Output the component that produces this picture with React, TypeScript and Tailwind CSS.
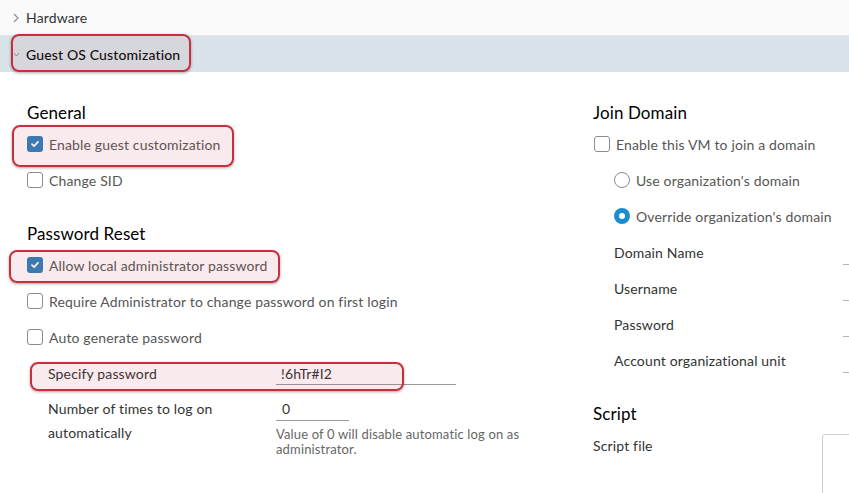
import React from 'react'

const font = { fontFamily: 'Lato, "Open Sans", sans-serif' }

function Checkbox({ checked }: { checked?: boolean }) {
  return checked ? (
    <span className="flex h-4 w-4 shrink-0 items-center justify-center rounded-[3px] bg-[#2b80be]">
      <svg width="10" height="10" viewBox="0 0 10 10">
        <path d="M2 5.2 L4.1 7.2 L8 2.8" fill="none" stroke="white" strokeWidth="1.8" strokeLinecap="round" strokeLinejoin="round" />
      </svg>
    </span>
  ) : (
    <span className="h-4 w-4 shrink-0 rounded-[3px] border border-[#8c8c8c] bg-white" />
  )
}

function Radio({ checked }: { checked?: boolean }) {
  return checked ? (
    <span className="flex h-4 w-4 shrink-0 items-center justify-center rounded-full bg-[#1b8ed0]">
      <span className="h-[6px] w-[6px] rounded-full bg-white" />
    </span>
  ) : (
    <span className="h-4 w-4 shrink-0 rounded-full border border-[#8c8c8c] bg-white" />
  )
}

function CheckRow({ label, checked }: { label: string; checked?: boolean }) {
  return (
    <div className="flex h-9 items-center gap-[6px] text-[14px] tracking-[0.15px] text-[#565656]">
      <Checkbox checked={checked} />
      <span>{label}</span>
    </div>
  )
}

function Heading({ children }: { children: React.ReactNode }) {
  return <div className="flex h-[26px] items-center text-[17px] tracking-[0.1px] text-black">{children}</div>
}

function FieldRow({ label }: { label: string }) {
  return (
    <div className="flex h-9 items-center pl-[21px] text-[14px] tracking-[0.15px] text-[#333]">
      <span className="w-[229px] shrink-0">{label}</span>
      <span className="mt-[24px] h-px w-[120px] shrink-0 bg-[#b5b5b5]" />
    </div>
  )
}

function Highlight({ className }: { className: string }) {
  return (
    <div
      className={`pointer-events-none absolute rounded-[8px] border-2 border-[#c72f3e] shadow-[0_1px_3px_rgba(0,0,0,0.35)] ${className}`}
    />
  )
}

export default function App() {
  return (
    <div className="relative h-[493px] w-[849px] overflow-hidden bg-white" style={font}>
      {/* tree rows */}
      <div className="flex h-9 items-center border-b border-[#e6e6e6] bg-[#fafafa] text-[14px] tracking-[0.15px] text-[#333]">
        <svg className="ml-[13px] mr-[7px]" width="6" height="10" viewBox="0 0 6 10">
          <path d="M1 1 L5 5 L1 9" fill="none" stroke="#8a8a8a" strokeWidth="1.1" />
        </svg>
        <span>Hardware</span>
      </div>
      <div className="flex h-9 items-center bg-[#d9e3ea] text-[14px] font-medium tracking-[0.15px] text-black">
        <svg className="ml-[13px] mr-[6px]" width="7" height="5" viewBox="0 0 7 5">
          <path d="M1 1 L3.5 4 L6 1" fill="none" stroke="#8a8a8a" strokeWidth="1" />
        </svg>
        <span>Guest OS Customization</span>
      </div>

      {/* content */}
      <div className="flex pt-[28px]">
        <div className="w-[593px] shrink-0 pl-[27px]">
          <Heading>General</Heading>
          <CheckRow label="Enable guest customization" checked />
          <CheckRow label="Change SID" />

          <div className="mt-[23px]">
            <Heading>Password Reset</Heading>
          </div>
          <CheckRow label="Allow local administrator password" checked />
          <CheckRow label="Require Administrator to change password on first login" />
          <CheckRow label="Auto generate password" />

          <div className="flex h-9 items-center pl-[21px] text-[14px] tracking-[0.15px] text-[#333]">
            <span className="w-[228px] shrink-0">Specify password</span>
            <div className="flex h-[24px] w-[180px] items-center border-b border-[#9a9a9a] pl-[5px] pt-[1px]">
              !6hTr#I2
            </div>
          </div>

          <div className="flex pl-[21px] pt-[6px] text-[14px] tracking-[0.15px] text-[#333]">
            <div className="w-[228px] shrink-0 leading-6">
              Number of times to log on
              <br />
              automatically
            </div>
            <div>
              <div className="flex h-[24px] w-[73px] items-center border-b border-[#9a9a9a] pl-[6px]">0</div>
              <div className="mt-[6px] text-[13px] leading-[15px] text-[#666]">
                Value of 0 will disable automatic log on as
                <br />
                administrator.
              </div>
            </div>
          </div>
        </div>

        <div className="flex-1">
          <Heading>Join Domain</Heading>
          <div className="pl-px">
            <CheckRow label="Enable this VM to join a domain" />
          </div>
          <div className="flex h-9 items-center gap-[6px] pl-[21px] text-[14px] tracking-[0.15px] text-[#565656]">
            <Radio />
            <span>Use organization's domain</span>
          </div>
          <div className="flex h-9 items-center gap-[6px] pl-[21px] text-[14px] tracking-[0.15px] text-[#565656]">
            <Radio checked />
            <span>Override organization's domain</span>
          </div>
          <FieldRow label="Domain Name" />
          <FieldRow label="Username" />
          <FieldRow label="Password" />
          <FieldRow label="Account organizational unit" />

          <div className="mt-[23px]">
            <Heading>Script</Heading>
          </div>
          <div className="flex text-[14px] tracking-[0.15px] text-[#333]">
            <span className="flex h-9 w-[229px] shrink-0 items-center">Script file</span>
            <div className="mt-[7px] h-[80px] w-[200px] shrink-0 rounded-[3px] border border-[#d0d0d0]" />
          </div>
        </div>
      </div>

      {/* annotation highlights */}
      <Highlight className="left-[11px] top-[34px] h-[38px] w-[180px] bg-[rgba(200,120,130,0.12)]" />
      <Highlight className="left-[12px] top-[125px] h-[42px] w-[222px] bg-[rgba(200,60,80,0.1)]" />
      <Highlight className="left-[9px] top-[250px] h-[33px] w-[271px] bg-[rgba(200,60,80,0.1)]" />
      <Highlight className="left-[30px] top-[362px] h-[29px] w-[374px] bg-[rgba(200,60,80,0.1)]" />
    </div>
  )
}
